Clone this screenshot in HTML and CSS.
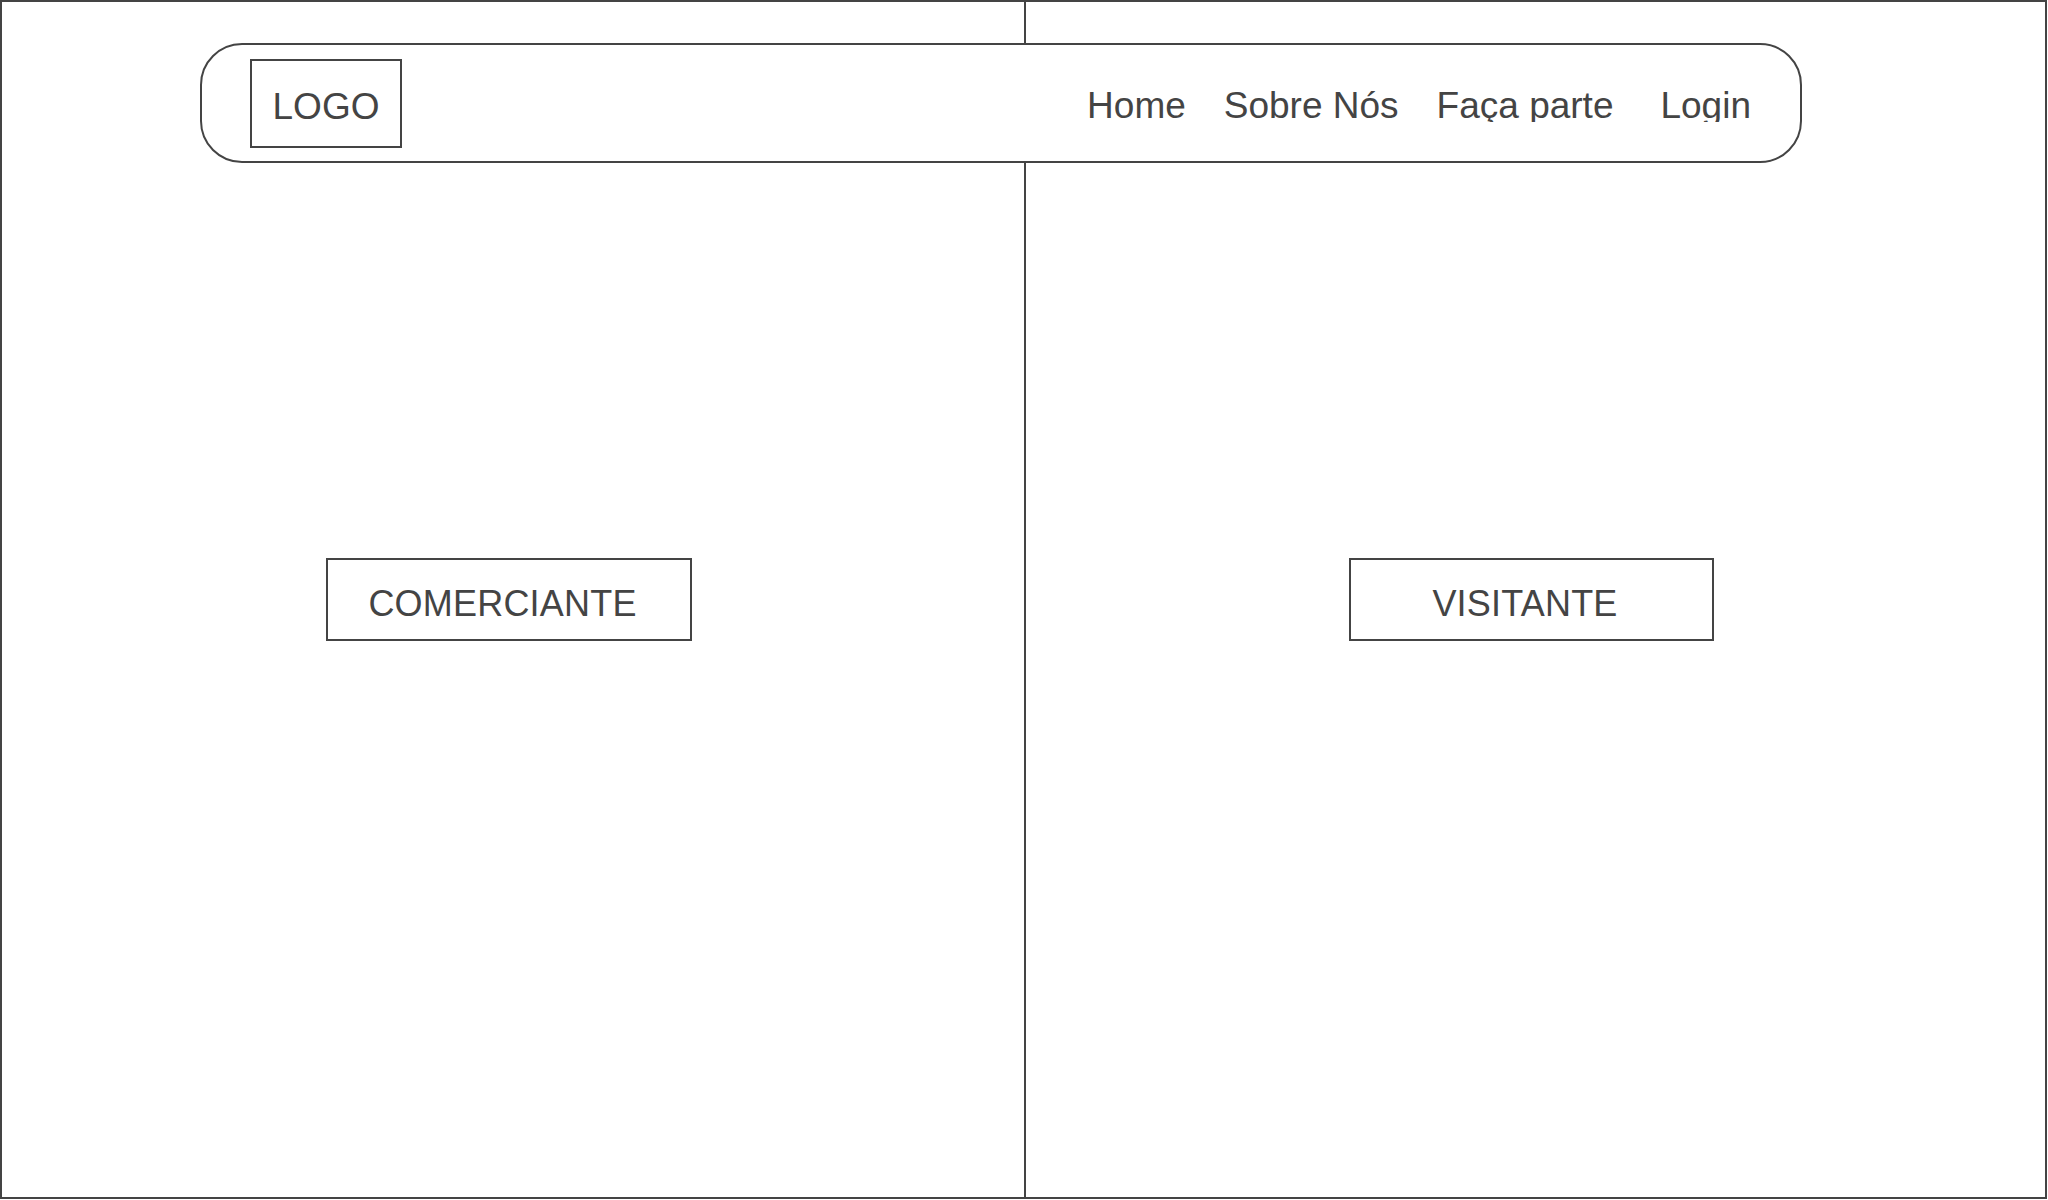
FILE: index.html
```html
<!DOCTYPE html>
<html lang="pt">
<head>
<meta charset="utf-8">
<title>Escolha</title>
<link rel="stylesheet" href="styles.css">
</head>
<body>
<div class="page">
  <header class="navbar">
    <div class="logo">LOGO</div>
    <nav class="nav">
      <a class="nav-link" href="#">Home</a>
      <a class="nav-link" href="#">Sobre Nós</a>
      <a class="nav-link" href="#">Faça parte</a>
      <a class="nav-link nav-link--login" href="#">Login</a>
    </nav>
  </header>
  <section class="panel panel--left">
    <button class="choice" type="button">COMERCIANTE</button>
  </section>
  <section class="panel panel--right">
    <button class="choice" type="button">VISITANTE</button>
  </section>
</div>
</body>
</html>
```
FILE: styles.css
```css
html, body {
  margin: 0;
  padding: 0;
  background: #fff;
}

body {
  font-family: "Liberation Sans", Arial, sans-serif;
  color: #444;
}

.page {
  position: relative;
  box-sizing: border-box;
  width: 2047px;
  height: 1199px;
  border: 2px solid #444;
  display: grid;
  grid-template-columns: 1024px 1fr;
  background: #fff;
}

.panel {
  display: flex;
  align-items: center;
  justify-content: center;
}

.panel--left {
  box-sizing: border-box;
  border-right: 2px solid #444;
}

.choice {
  box-sizing: border-box;
  width: 366px;
  height: 83px;
  margin-right: 9px;
  padding: 8px 12px 0 0;
  border: 2px solid #444;
  background: #fff;
  color: #444;
  font-family: "Liberation Sans", Arial, sans-serif;
  font-size: 36px;
  line-height: normal;
  letter-spacing: 0.2px;
  display: flex;
  align-items: center;
  justify-content: center;
  cursor: pointer;
}

.panel--right .choice {
  width: 365px;
}

.navbar {
  position: absolute;
  left: 198px;
  top: 41px;
  box-sizing: border-box;
  width: 1602px;
  height: 120px;
  border: 2px solid #444;
  border-radius: 42px;
  background: #fff;
  display: flex;
  align-items: center;
  padding: 0 49px 0 48px;
}

.logo {
  box-sizing: border-box;
  width: 152px;
  height: 89px;
  border: 2px solid #444;
  padding-top: 7px;
  display: flex;
  align-items: center;
  justify-content: center;
  font-size: 37px;
  line-height: normal;
  color: #444;
}

.nav {
  margin-left: auto;
  height: 37px;
  overflow: hidden;
  display: flex;
  align-items: flex-start;
  gap: 38px;
}

.nav-link {
  font-size: 37px;
  line-height: normal;
  color: #444;
  text-decoration: none;
  white-space: nowrap;
}

.nav-link--login {
  margin-left: 9px;
}
```
